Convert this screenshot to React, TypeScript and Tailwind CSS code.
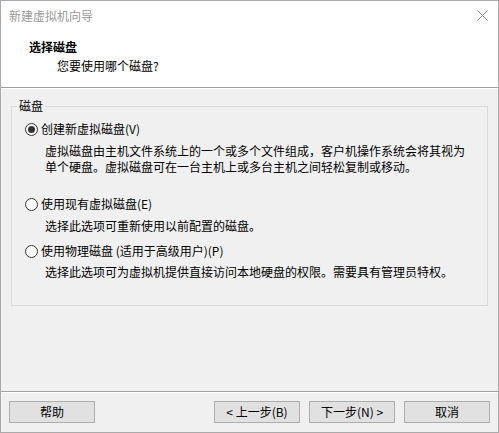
const font = { fontFamily: '"Noto Sans CJK SC", "Noto Sans", sans-serif' };

interface DiskOption {
  label: string;
  checked: boolean;
  lines: string[];
}

const options: DiskOption[] = [
  {
    label: "创建新虚拟磁盘(V)",
    checked: true,
    lines: [
      "虚拟磁盘由主机文件系统上的一个或多个文件组成，客户机操作系统会将其视为",
      "单个硬盘。虚拟磁盘可在一台主机上或多台主机之间轻松复制或移动。",
    ],
  },
  {
    label: "使用现有虚拟磁盘(E)",
    checked: false,
    lines: ["选择此选项可重新使用以前配置的磁盘。"],
  },
  {
    label: "使用物理磁盘 (适用于高级用户)(P)",
    checked: false,
    lines: ["选择此选项可为虚拟机提供直接访问本地硬盘的权限。需要具有管理员特权。"],
  },
];

function Radio({ checked }: { checked: boolean }) {
  return (
    <span className="w-[13px] h-[13px] rounded-full border border-[#333333] bg-white flex items-center justify-center shrink-0">
      {checked && <span className="w-[7px] h-[7px] rounded-full bg-[#333333]" />}
    </span>
  );
}

function Button({ children, className = "" }: { children: React.ReactNode; className?: string }) {
  return (
    <button className={`w-[86px] h-[22px] bg-[#e1e1e1] border border-[#adadad] text-[12px] leading-[20px] text-black ${className}`}>
      {children}
    </button>
  );
}

export default function App() {
  return (
    <div
      className="w-[499px] h-[433px] border border-[#aaaaaa] bg-[#f0f0f0] flex flex-col text-[12px] text-black overflow-hidden"
      style={font}
    >
      {/* title + header */}
      <div className="bg-white h-[86px] shrink-0 flex flex-col">
        <div className="h-[29px] flex items-center justify-between pl-[8px] pr-[10px]">
          <span className="text-[#999999] leading-[16px]">新建虚拟机向导</span>
          <svg width="11" height="11" viewBox="0 0 11 11">
            <path d="M0.5 0.5 L10.5 10.5 M10.5 0.5 L0.5 10.5" stroke="#8a8a8a" strokeWidth="1" />
          </svg>
        </div>
        <div className="pl-[28px] mt-[9px] font-bold leading-[16px]">选择磁盘</div>
        <div className="pl-[56px] mt-[3px] leading-[16px]">您要使用哪个磁盘?</div>
      </div>
      <div className="h-px bg-[#a0a0a0] shrink-0" />
      <div className="h-px bg-white shrink-0" />

      {/* group box */}
      <fieldset className="ml-[10px] w-[477px] h-[208px] mt-[9px] border border-[#d9d9d9] shrink-0">
        <legend className="ml-[5px] px-[2px] leading-[16px]">磁盘</legend>
        <div className="flex flex-col pt-[7px]">
          {options.map((opt, i) => (
            <div key={i} className={i === 1 ? "mt-[21px]" : i === 2 ? "mt-[9px]" : ""}>
              <div className="flex items-center h-[16px] pl-[13px] gap-[3px]">
                <Radio checked={opt.checked} />
                <span className="leading-[16px]">{opt.label}</span>
              </div>
              <div className={`pl-[33px] ${i === 2 ? "mt-[5px]" : "mt-[6px]"}`}>
                {opt.lines.map((l, j) => (
                  <div key={j} className="leading-[16px] whitespace-nowrap">
                    {l}
                  </div>
                ))}
              </div>
            </div>
          ))}
        </div>
      </fieldset>

      <div className="flex-1" />

      {/* footer */}
      <div className="h-px bg-[#a0a0a0] shrink-0" />
      <div className="h-px bg-white shrink-0" />
      <div className="h-[39px] shrink-0 flex items-start pt-[8px] pl-[8px]">
        <Button>帮助</Button>
        <Button className="ml-[119px]">&lt; 上一步(B)</Button>
        <Button className="ml-[9px]">下一步(N) &gt;</Button>
        <Button className="ml-[9px]">取消</Button>
      </div>
    </div>
  );
}
